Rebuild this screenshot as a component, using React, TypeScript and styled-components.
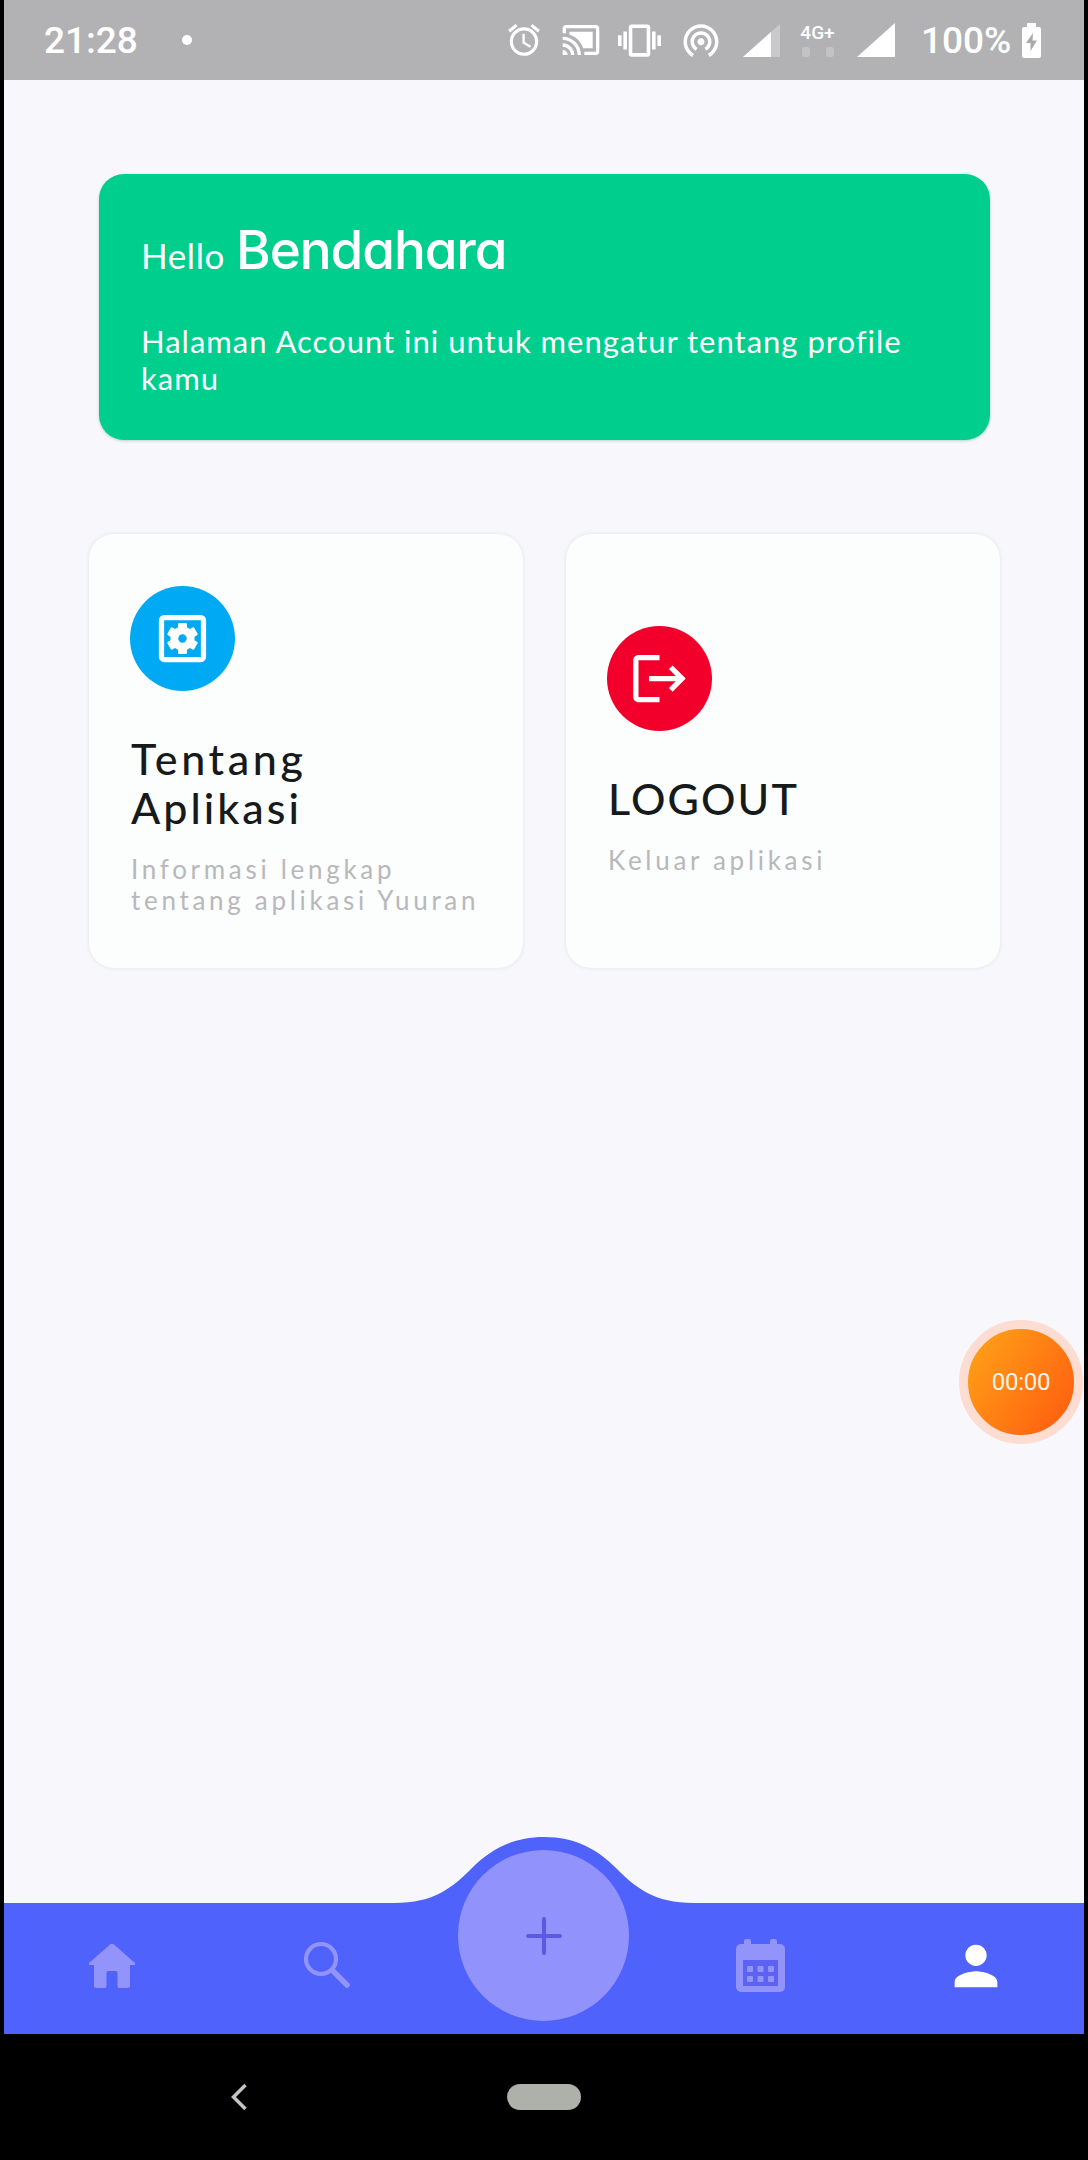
import React from "react";
import styled, { createGlobalStyle } from "styled-components";
import {
  MdAlarm,
  MdCastConnected,
  MdPerson,
  MdVibration,
  MdWifiTethering,
} from "react-icons/md";

const GlobalStyle = createGlobalStyle`
  *, *::before, *::after { box-sizing: border-box; }
  html, body { margin: 0; padding: 0; background: #000; }
`;

const Device = styled.div`
  display: flex;
  flex-direction: column;
  width: 1088px;
  height: 2160px;
  padding: 0 4px;
  overflow: hidden;
  background: #000;
  font-family: Lato, "Open Sans", sans-serif;
`;

const StatusBar = styled.header`
  display: flex;
  align-items: center;
  justify-content: space-between;
  flex: none;
  height: 80px;
  padding: 0 43px 0 40px;
  background: #b2b2b5;
  color: #fff;
  font-family: Roboto, sans-serif;
`;

const StatusGroup = styled.div`
  display: flex;
  align-items: center;
  height: 80px;
`;

const StatusText = styled.span<{ $width: number }>`
  width: ${(p) => p.$width}px;
  font-size: 37px;
  font-weight: 500;
  line-height: 80px;
  padding-top: 2px;
  white-space: nowrap;
`;

const NoticeDot = styled.span`
  width: 10px;
  height: 10px;
  margin-left: 43px;
  border-radius: 50%;
  background: #fff;
`;

const StatusIcon = styled.span<{ $width: number; $gap: number }>`
  display: flex;
  align-items: center;
  justify-content: center;
  width: ${(p) => p.$width}px;
  margin-left: ${(p) => p.$gap}px;
  svg { flex: none; display: block; }
`;

const NetworkType = styled.div`
  display: flex;
  flex-direction: column;
  align-items: center;
  width: 37px;
  margin-left: 19px;
  font-size: 19px;
  font-weight: 500;
  line-height: 18px;
`;

const TrafficMarks = styled.div`
  display: flex;
  justify-content: space-between;
  width: 32px;
  margin-top: 5px;
  span { width: 8px; height: 10px; border-radius: 3px; background: #c3c3c6; }
`;

const Screen = styled.main`
  position: relative;
  flex: 1;
  display: flex;
  flex-direction: column;
  padding: 94px 84px 0 85px;
  background: #f8f8fc;
`;

const Greeting = styled.section`
  height: 266px;
  margin: 0 10px;
  padding: 43px 42px 0 42px;
  border-radius: 25px;
  background: #00ce8d;
  color: #fff;
  box-shadow: 0 1px 3px rgba(0, 90, 70, 0.25);
`;

const Hello = styled.div`
  display: flex;
  align-items: baseline;
  gap: 11px;
  height: 66px;
  line-height: 66px;
  font-size: 35px;
  font-weight: 400;
  letter-spacing: 0.6px;
`;

const UserName = styled.strong`
  font-family: Inter, sans-serif;
  font-feature-settings: "cv11";
  font-size: 53px;
  font-weight: 500;
  letter-spacing: -1.1px;
`;

const GreetingText = styled.p`
  margin: 40px 0 0;
  font-size: 31px;
  font-weight: 400;
  line-height: 37px;
  letter-spacing: 1px;
  white-space: nowrap;
`;

const Cards = styled.section`
  display: grid;
  grid-template-columns: 434px 434px;
  justify-content: space-between;
  margin-top: 94px;
`;

const Card = styled.article`
  display: flex;
  flex-direction: column;
  justify-content: center;
  height: 434px;
  padding: 0 0 0 41px;
  border-radius: 25px;
  background: #fcfdfd;
  box-shadow: 0 0 4px rgba(60, 60, 80, 0.12);
`;

const Badge = styled.div<{ $color: string }>`
  display: flex;
  align-items: center;
  justify-content: center;
  width: 105px;
  height: 105px;
  border-radius: 50%;
  background: ${(p) => p.$color};
`;

const CardTitle = styled.h2`
  margin: 43px 0 0 1px;
  color: #171a1b;
  font-size: 43px;
  font-weight: 500;
  line-height: 49px;
`;

const TitleLine = styled.span<{ $spacing: number }>`
  display: block;
  letter-spacing: ${(p) => p.$spacing}px;
`;

const CardText = styled.p`
  margin: 22px 0 0 1px;
  color: #b8b8ba;
  font-size: 26px;
  font-weight: 400;
  line-height: 31px;
  letter-spacing: 3.7px;
  white-space: nowrap;
`;

const RecorderClip = styled.div`
  position: absolute;
  top: 1230px;
  right: 0;
  width: 126px;
  height: 144px;
  overflow: hidden;
`;

const Recorder = styled.div`
  display: flex;
  align-items: center;
  justify-content: center;
  width: 124px;
  height: 124px;
  margin: 10px 0 0 1px;
  border: 9px solid #fddcd2;
  border-radius: 50%;
  background: linear-gradient(125deg, #ff9c17 12%, #ff6410 85%);
  color: #fff3e4;
  font-family: Roboto, sans-serif;
  font-size: 24px;
  letter-spacing: -0.3px;
`;

const TabBar = styled.nav`
  position: relative;
  display: grid;
  grid-template-columns: repeat(5, 216px);
  flex: none;
  height: 131px;
  background: #4f62fc;
`;

const Bump = styled.svg`
  position: absolute;
  left: 390px;
  top: -66px;
`;

const Tab = styled.div`
  display: flex;
  justify-content: center;
  svg { display: block; flex: none; }
`;

const PersonIcon = styled(MdPerson)`
  margin-top: 31px;
  color: #fff;
`;

const AddButton = styled.div`
  position: absolute;
  left: 454px;
  top: -53px;
  display: flex;
  align-items: center;
  justify-content: center;
  width: 171px;
  height: 171px;
  border-radius: 50%;
  background: #9292fc;
`;

const SystemNav = styled.footer`
  display: grid;
  grid-template-columns: 1fr 74px 1fr;
  align-items: center;
  flex: none;
  height: 126px;
  background: #000;
`;

const BackKey = styled.div`
  display: flex;
  padding-left: 226px;
`;

const HomePill = styled.div`
  height: 26px;
  border-radius: 13px;
  background: #adb1aa;
`;

const FADED = "#9293fb";

const PartialSignal = () => (
  <svg width="37" height="33" viewBox="0 0 37 33">
    <path d="M37 0V33H0Z" fill="#c9c9cc" />
    <path d="M28 8V33H0Z" fill="#fff" />
  </svg>
);

const FullSignal = () => (
  <svg width="38" height="34" viewBox="0 0 38 34">
    <path d="M38 0V34H0Z" fill="#fff" />
  </svg>
);

const Battery = () => (
  <svg width="19" height="35" viewBox="0 0 19 35">
    <path d="M5 0h9v4h3q2 0 2 2v27q0 2-2 2H2q-2 0-2-2V6q0-2 2-2h3z" fill="#fff" />
    <path d="M11 10L4 20h4.500v8L15 17.500h-4.500z" fill="#a9a9ac" />
  </svg>
);

const SettingsIcon = () => (
  <svg width="63" height="63" viewBox="0 0 24 24">
    <rect x="4" y="4" width="16" height="16" rx="1" fill="none" stroke="#fff" strokeWidth="2" />
    <g fill="#fff">
      {[0, 60, 120].map((angle) => (
        <rect
          key={angle}
          x="10.300"
          y="6.100"
          width="3.400"
          height="11.800"
          rx="0.500"
          transform={`rotate(${angle} 12 12)`}
        />
      ))}
      <circle cx="12" cy="12" r="4.600" />
    </g>
    <circle cx="12" cy="12" r="1.600" fill="#00a9f4" />
  </svg>
);

const LogoutIcon = () => (
  <svg width="63" height="63" viewBox="0 0 24 24" fill="#fff">
    <path d="M17 7l-1.410 1.410L18.170 11H8v2h10.170l-2.580 2.580L17 17l5-5zM4 5h8V3H4c-1.100 0-2 .9-2 2v14c0 1.100.9 2 2 2h8v-2H4V5z" />
  </svg>
);

const HomeIcon = () => (
  <svg width="48" height="131" viewBox="0 0 48 131">
    <path
      d="M24 41Q25 40 26.500 42L47 60Q48 62 45.500 62H42V83Q42 85 40 85H31Q29.500 85 29.500 83V70Q29.500 68 28 68H20Q18.500 68 18.500 70V83Q18.500 85 17 85H8Q6 85 6 83V62H2.500Q0 62 1 60L21.500 42Q23 40 24 41Z"
      fill={FADED}
    />
  </svg>
);

const SearchIcon = () => (
  <svg width="48" height="131" viewBox="0 0 48 131" fill="none" stroke={FADED}>
    <circle cx="17" cy="56" r="15" strokeWidth="4.200" />
    <path d="M27 66L31 70" strokeWidth="4" />
    <path d="M30 69L43 82" strokeWidth="5.500" strokeLinecap="round" />
  </svg>
);

const CalendarIcon = () => (
  <svg width="49" height="131" viewBox="0 0 49 131">
    <rect x="8" y="36" width="7" height="10" rx="2" fill={FADED} />
    <rect x="34" y="36" width="7" height="10" rx="2" fill={FADED} />
    <rect y="41" width="49" height="48" rx="5" fill={FADED} />
    <rect x="7" y="57" width="35" height="26" fill="#5e62f2" />
    {[11, 21.5, 32].map((x) =>
      [63, 73].map((y) => (
        <rect key={`${x}-${y}`} x={x} y={y} width="6" height="6" rx="1" fill={FADED} />
      ))
    )}
  </svg>
);

const PlusIcon = () => (
  <svg width="36" height="38" viewBox="0 0 36 38" stroke="#5b59e6" strokeWidth="4" strokeLinecap="round">
    <path d="M18 2V36M2 19H34" />
  </svg>
);

export default function App() {
  return (
    <>
      <GlobalStyle />
      <Device>
        <StatusBar>
          <StatusGroup>
            <StatusText $width={95}>21:28</StatusText>
            <NoticeDot />
          </StatusGroup>
          <StatusGroup>
            <StatusIcon $width={32} $gap={0}><MdAlarm size={38} /></StatusIcon>
            <StatusIcon $width={37} $gap={22}><MdCastConnected size={40} /></StatusIcon>
            <StatusIcon $width={43} $gap={19}><MdVibration size={43} /></StatusIcon>
            <StatusIcon $width={35} $gap={22}><MdWifiTethering size={42} /></StatusIcon>
            <StatusIcon $width={37} $gap={25}><PartialSignal /></StatusIcon>
            <NetworkType>
              4G+
              <TrafficMarks><span /><span /></TrafficMarks>
            </NetworkType>
            <StatusIcon $width={38} $gap={21}><FullSignal /></StatusIcon>
            <StatusIcon $width={88} $gap={26}><StatusText $width={88}>100%</StatusText></StatusIcon>
            <StatusIcon $width={19} $gap={13}><Battery /></StatusIcon>
          </StatusGroup>
        </StatusBar>

        <Screen>
          <Greeting>
            <Hello>
              Hello <UserName>Bendahara</UserName>
            </Hello>
            <GreetingText>
              Halaman Account ini untuk mengatur tentang profile
              <br />
              kamu
            </GreetingText>
          </Greeting>

          <Cards>
            <Card>
              <Badge $color="#00a9f4"><SettingsIcon /></Badge>
              <CardTitle>
                <TitleLine $spacing={3.6}>Tentang</TitleLine>
                <TitleLine $spacing={3}>Aplikasi</TitleLine>
              </CardTitle>
              <CardText>
                Informasi lengkap
                <br />
                tentang aplikasi Yuuran
              </CardText>
            </Card>
            <Card>
              <Badge $color="#f2002b"><LogoutIcon /></Badge>
              <CardTitle>
                <TitleLine $spacing={2.1}>LOGOUT</TitleLine>
              </CardTitle>
              <CardText>Keluar aplikasi</CardText>
            </Card>
          </Cards>

          <RecorderClip>
            <Recorder>00:00</Recorder>
          </RecorderClip>
        </Screen>

        <TabBar>
          <Bump width="300" height="68" viewBox="394 1837 300 68">
            <path
              d="M394 1905V1903C434 1903 452 1888 472 1868C490 1850 512 1837 544 1837C576 1837 598 1850 616 1868C636 1888 654 1903 694 1903V1905Z"
              fill="#4f62fc"
            />
          </Bump>
          <Tab><HomeIcon /></Tab>
          <Tab><SearchIcon /></Tab>
          <Tab>
            <AddButton><PlusIcon /></AddButton>
          </Tab>
          <Tab><CalendarIcon /></Tab>
          <Tab><PersonIcon size={64} /></Tab>
        </TabBar>

        <SystemNav>
          <BackKey>
            <svg width="18" height="28" viewBox="0 0 18 28" fill="none" stroke="#c3c6bd" strokeWidth="3.500">
              <path d="M15.500 2L3.500 14L15.500 26" />
            </svg>
          </BackKey>
          <HomePill />
        </SystemNav>
      </Device>
    </>
  );
}
